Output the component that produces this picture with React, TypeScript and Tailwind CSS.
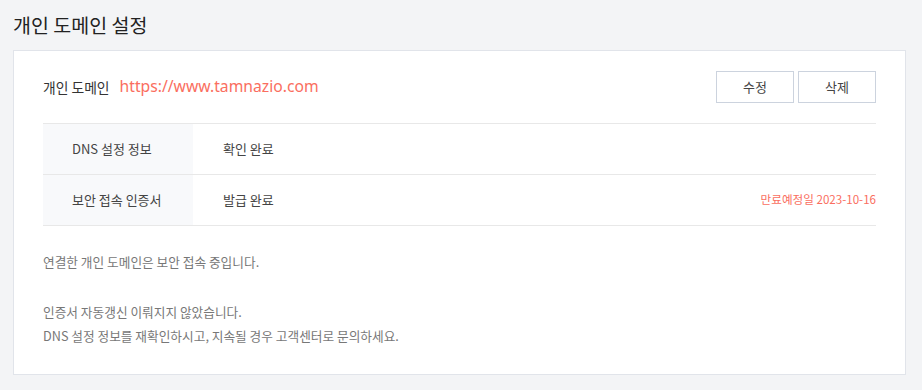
import React from "react";

export default function App() {
  return (
    <div
      className="w-[922px] h-[390px] bg-[#f3f4f6] pl-[13px] pr-[16px] pt-[9px]"
      style={{ fontFamily: '"Noto Sans CJK KR", "Noto Sans", sans-serif' }}
    >
      <h1 className="text-[19.5px] leading-[32px] text-[#222] font-normal">개인 도메인 설정</h1>
      <div className="mt-[9px] h-[325px] bg-white border border-[#e1e4ea] px-[29px] pt-[20px]">
        <div className="flex items-center justify-between h-[32px]">
          <div className="flex items-center">
            <span className="text-[13.8px] text-[#333]">개인 도메인</span>
            <span
              className="ml-[10px] text-[15.7px] text-[#fa6e60]"
              style={{ fontFamily: '"Noto Sans", "Noto Sans CJK KR", sans-serif' }}
            >
              https://www.tamnazio.com
            </span>
          </div>
          <div className="flex gap-[4px]">
            <button className="w-[78px] h-[32px] border border-[#ccd3de] bg-white text-[13px] text-[#444]">수정</button>
            <button className="w-[78px] h-[32px] border border-[#ccd3de] bg-white text-[13px] text-[#444]">삭제</button>
          </div>
        </div>
        <div className="mt-[20px] border-t border-[#e8e8e8]">
          <div className="flex h-[51px] border-b border-[#e8e8e8] text-[13px]">
            <div className="w-[150px] bg-[#f8f9fb] flex items-center pl-[29px] text-[#444]">DNS 설정 정보</div>
            <div className="flex-1 flex items-center pl-[30px] text-[#444]">확인 완료</div>
          </div>
          <div className="flex h-[51px] border-b border-[#e8e8e8] text-[13px]">
            <div className="w-[150px] bg-[#f8f9fb] flex items-center pl-[29px] text-[#444]">보안 접속 인증서</div>
            <div className="flex-1 flex items-center pl-[30px] text-[#444]">발급 완료</div>
            <div className="flex items-center text-[11.6px] text-[#fa6e60]">만료예정일 2023-10-16</div>
          </div>
        </div>
        <p className="mt-[24px] text-[12.7px] leading-[24px] text-[#777]">연결한 개인 도메인은 보안 접속 중입니다.</p>
        <div className="mt-[26px] text-[12.7px] leading-[24px] text-[#777]">
          <p>인증서 자동갱신 이뤄지지 않았습니다.</p>
          <p>DNS 설정 정보를 재확인하시고, 지속될 경우 고객센터로 문의하세요.</p>
        </div>
      </div>
    </div>
  );
}
